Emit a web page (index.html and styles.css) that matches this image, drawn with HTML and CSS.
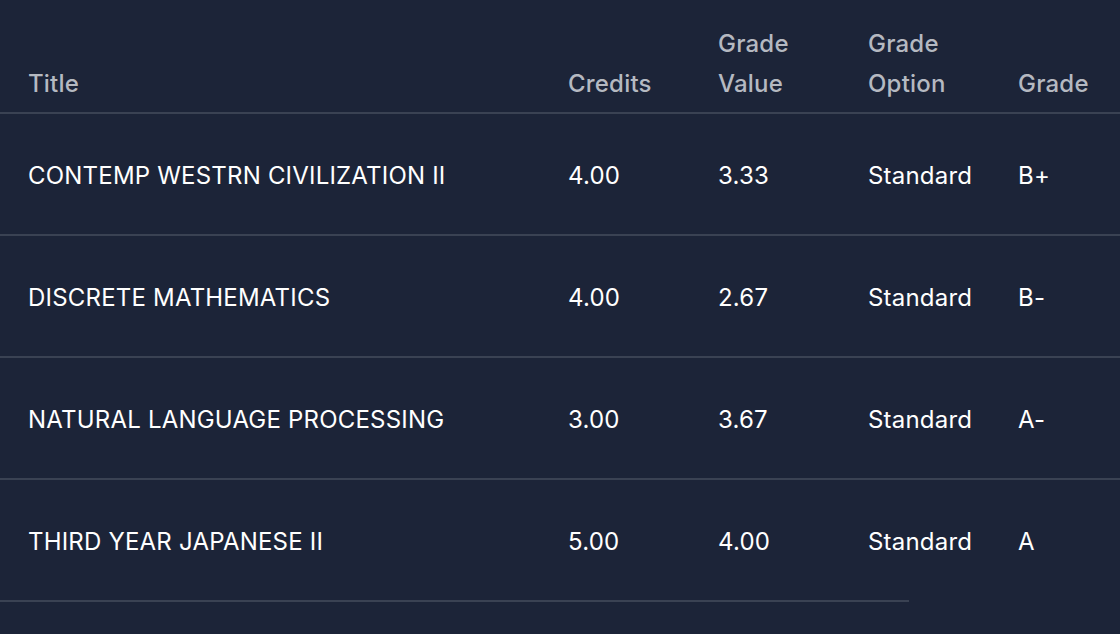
FILE: index.html
```
<!DOCTYPE html>
<html>
<head>
<meta charset="utf-8">
<link rel="stylesheet" href="styles.css">
</head>
<body>
<div class="wrap">
<table class="grades">
  <colgroup>
    <col class="c-title"><col class="c-num"><col class="c-num"><col class="c-num"><col class="c-last">
  </colgroup>
  <thead>
    <tr>
      <th>Title</th>
      <th>Credits</th>
      <th>Grade<br>Value</th>
      <th>Grade<br>Option</th>
      <th>Grade</th>
    </tr>
  </thead>
  <tbody>
    <tr><td>CONTEMP WESTRN CIVILIZATION II</td><td>4.00</td><td>3.33</td><td>Standard</td><td>B+</td></tr>
    <tr><td>DISCRETE MATHEMATICS</td><td>4.00</td><td>2.67</td><td>Standard</td><td>B-</td></tr>
    <tr><td>NATURAL LANGUAGE PROCESSING</td><td>3.00</td><td>3.67</td><td>Standard</td><td>A-</td></tr>
    <tr class="last"><td>THIRD YEAR JAPANESE II</td><td>5.00</td><td>4.00</td><td>Standard</td><td>A</td></tr>
  </tbody>
</table>
<div class="endline"></div>
</div>
</body>
</html>
```
FILE: styles.css
```
html, body {
  margin: 0;
  padding: 0;
  background: #1c2438;
}
.wrap {
  width: 1120px;
  height: 634px;
  background: #1c2438;
  font-family: Inter, Lato, sans-serif;
  letter-spacing: 0.2px;
}
.grades {
  width: 1120px;
  border-collapse: collapse;
  table-layout: fixed;
}
.c-title { width: 540px; }
.c-num { width: 150px; }
.c-last { width: 130px; }
.grades th {
  text-align: left;
  vertical-align: bottom;
  font-size: 24px;
  line-height: 40px;
  font-weight: 500;
  color: #b5b9c1;
  padding: 24px 0 8px 28px;
  border-bottom: 2px solid #3a4253;
}
.grades td {
  height: 116px;
  padding: 4px 0 0 28px;
  font-size: 24px;
  line-height: 30px;
  color: #ffffff;
  vertical-align: middle;
  white-space: nowrap;
  border-bottom: 2px solid #3a4253;
}
.grades tr.last td {
  border-bottom: none;
}
.endline {
  width: 909px;
  height: 2px;
  background: #3a4253;
}
```
